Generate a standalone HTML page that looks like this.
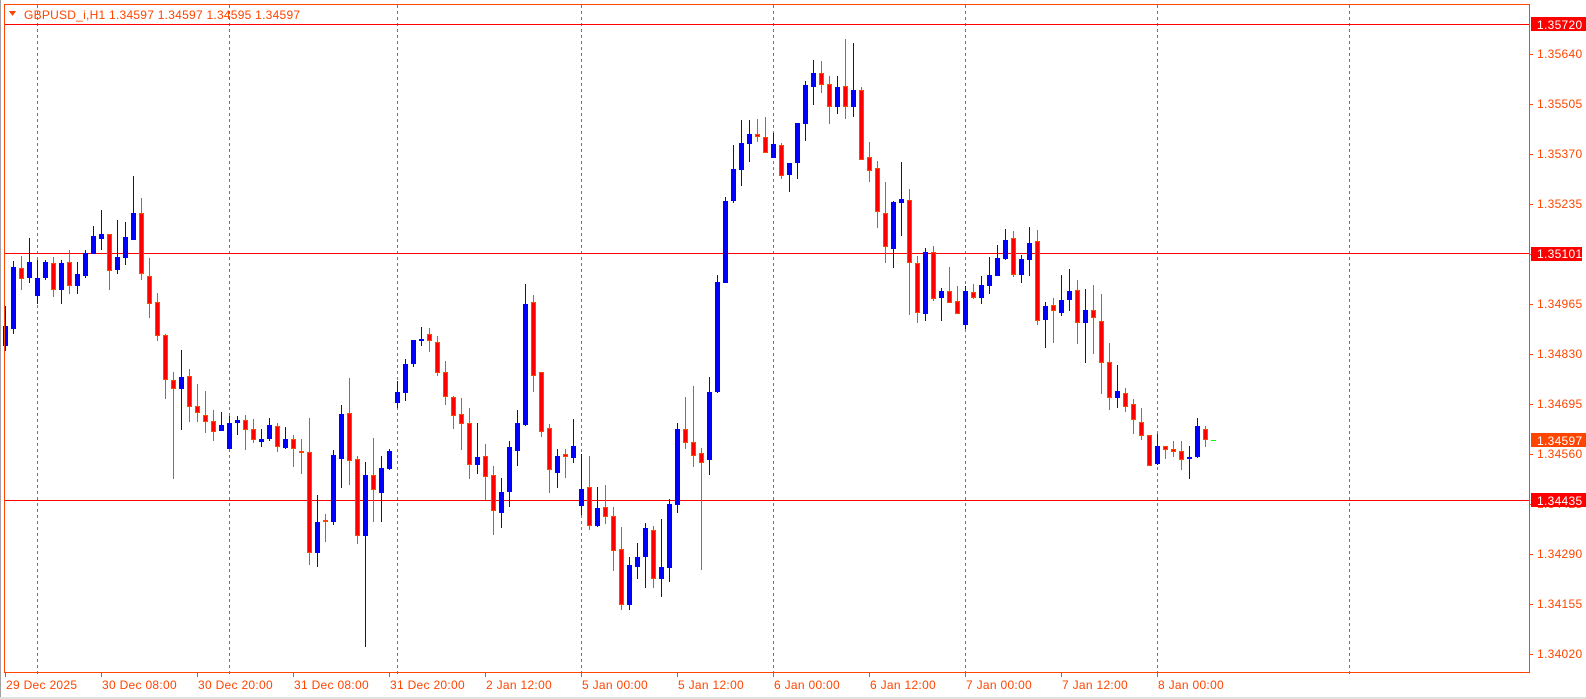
<!DOCTYPE html>
<html><head><meta charset="utf-8">
<style>
html,body{margin:0;padding:0;background:#fff;width:1586px;height:699px;overflow:hidden}
svg{display:block}
text{font-family:"Liberation Sans",sans-serif;font-size:12px;letter-spacing:0.3px}
</style></head><body>
<svg id="s" width="1586" height="699" xmlns="http://www.w3.org/2000/svg" shape-rendering="crispEdges">
<rect x="0" y="0" width="1586" height="699" fill="#fff"/>
<rect x="0" y="0" width="1" height="699" fill="#a0a0a0"/>
<rect x="0" y="697" width="1586" height="2" fill="#e0e0e0"/>
<g id="grid"></g>
<rect x="4" y="24" width="1526" height="1" fill="#ff0000"/>
<rect x="4" y="253" width="1526" height="1" fill="#ff0000"/>
<rect x="4" y="500" width="1526" height="1" fill="#ff0000"/>
<g id="c"></g>
<rect x="1211" y="440" width="5" height="1" fill="#00ff00"/>
<rect x="4.5" y="4.5" width="1525" height="668" fill="none" stroke="#ff4500" stroke-width="1"/>
<g id="ax"></g>
<polygon points="9,11 16,11 12.5,16" fill="#ff4500"/>
<text x="24" y="19" fill="#ff4500" style="letter-spacing:0.25px">GBPUSD_i,H1  1.34597 1.34597 1.34595 1.34597</text>
<g fill="#ff4500">
<text x="6" y="689">29 Dec 2025</text>
<text x="102" y="689">30 Dec 08:00</text>
<text x="198" y="689">30 Dec 20:00</text>
<text x="294" y="689">31 Dec 08:00</text>
<text x="390" y="689">31 Dec 20:00</text>
<text x="486" y="689">2 Jan 12:00</text>
<text x="582" y="689">5 Jan 00:00</text>
<text x="678" y="689">5 Jan 12:00</text>
<text x="774" y="689">6 Jan 00:00</text>
<text x="870" y="689">6 Jan 12:00</text>
<text x="966" y="689">7 Jan 00:00</text>
<text x="1062" y="689">7 Jan 12:00</text>
<text x="1158" y="689">8 Jan 00:00</text>
</g>
<g fill="#ff4500">
<text x="1537" y="58">1.35640</text>
<text x="1537" y="108">1.35505</text>
<text x="1537" y="158">1.35370</text>
<text x="1537" y="208">1.35235</text>
<text x="1537" y="308">1.34965</text>
<text x="1537" y="358">1.34830</text>
<text x="1537" y="408">1.34695</text>
<text x="1537" y="458">1.34560</text>
<text x="1537" y="508">1.34425</text>
<text x="1537" y="558">1.34290</text>
<text x="1537" y="608">1.34155</text>
<text x="1537" y="658">1.34020</text>
</g>
<rect x="1531" y="17" width="55" height="14" fill="#ff0000"/>
<text x="1537" y="29" fill="#fff">1.35720</text>
<rect x="1531" y="247" width="51" height="14" fill="#ff0000"/>
<text x="1537" y="258" fill="#fff">1.35101</text>
<rect x="1531" y="433" width="55" height="14" fill="#ff4500"/>
<text x="1537" y="445" fill="#fff">1.34597</text>
<rect x="1531" y="493" width="55" height="14" fill="#ff0000"/>
<text x="1537" y="505" fill="#fff">1.34435</text>
</svg>
<script>
var NS="http://www.w3.org/2000/svg";
function R(g,x,y,w,h,f){var r=document.createElementNS(NS,"rect");r.setAttribute("x",x);r.setAttribute("y",y);r.setAttribute("width",w);r.setAttribute("height",h);r.setAttribute("fill",f);g.appendChild(r);}
var grid=document.getElementById("grid");
[37,229,397,581,773,965,1157,1349].forEach(function(x){for(var y=5;y<673;y+=6)R(grid,x,y,1,3,"#ff4500");});
var ax=document.getElementById("ax");
[53.6,103.6,153.6,203.7,253.7,303.7,353.7,403.7,453.7,503.7,553.7,603.7,653.7].forEach(function(y){R(ax,1530,Math.round(y),3,1,"#ff4500");});
for(var i=0;i<13;i++)R(ax,5+96*i,673,1,4,"#ff4500");
var d=[
[306,351,326,346,1],[261,334,267,329,1],[256,290,268,279,0],[238,283,262,278,1],[260,304,278,296,1],
[260,280,262,278,1],[257,297,263,290,0],[260,304,263,290,1],[250,294,262,286,0],[262,294,274,286,1],
[250,278,253,276,1],[226,254,236,254,1],[210,250,234,239,1],[234,290,234,271,0],[220,274,257,270,1],
[222,265,237,258,1],[176,240,213,240,1],[198,280,213,274,0],[258,318,276,304,0],[293,341,302,336,0],
[334,399,335,380,0],[372,479,380,389,0],[350,430,377,389,1],[369,422,376,407,0],[384,422,406,413,0],
[391,433,415,422,0],[410,441,421,432,0],[412,431,425,431,1],[416,449,423,449,1],[416,435,420,423,1],
[415,450,420,430,0],[419,443,429,440,0],[429,447,439,442,1],[418,441,425,439,1],[423,452,426,447,0],
[427,449,439,448,1],[435,467,439,449,0],[439,474,451,453,0],[418,565,452,553,0],[495,567,522,553,1],
[514,542,520,522,0],[450,525,455,522,1],[405,488,414,459,1],[378,485,413,461,0],[456,544,459,536,0],
[462,647,475,536,1],[438,522,475,490,0],[456,522,468,493,1],[449,470,451,469,1],[381,408,392,403,1],
[359,401,364,393,1],[340,367,340,364,1],[327,346,339,341,1],[328,352,334,341,0],[336,376,342,373,0],
[361,405,372,397,0],[396,429,397,416,0],[398,450,414,424,0],[408,479,423,465,0],[423,474,457,465,1],
[444,500,456,477,0],[466,535,475,511,0],[478,528,492,513,1],[441,507,447,492,1],[410,466,423,451,1],
[284,426,304,425,1],[295,392,302,376,0],[372,437,372,432,0],[424,493,428,470,0],[449,488,456,473,1],
[449,478,454,457,0],[419,463,446,458,1],[454,515,489,506,1],[456,530,487,526,0],[487,527,508,526,1],
[485,524,507,517,0],[507,571,516,551,0],[527,610,549,605,0],[557,610,565,605,1],[543,579,557,567,1],
[523,588,528,557,1],[526,588,530,579,0],[519,597,567,579,1],[499,582,504,568,1],[423,513,429,505,1],
[397,449,429,443,0],[386,467,442,456,0],[448,570,453,463,0],[377,475,392,460,1],[275,393,282,392,1],
[197,283,201,283,1],[145,203,169,201,1],[120,186,143,170,1],[120,162,134,144,1],[119,142,134,137,0],
[117,153,137,153,0],[133,158,144,158,1],[143,179,145,176,0],[163,192,163,175,1],[123,179,123,163,1],
[81,141,85,124,1],[60,105,73,87,1],[61,93,73,85,0],[76,124,84,107,0],[76,114,87,107,1],
[39,119,86,107,0],[43,117,90,107,1],[87,160,90,160,0],[142,182,157,171,0],[161,228,168,212,0],
[182,263,213,247,0],[201,268,202,249,1],[162,236,199,203,1],[189,315,200,263,0],[256,323,263,313,0],
[248,321,252,314,1],[246,301,252,299,0],[288,321,291,298,1],[267,303,291,303,0],[286,314,301,314,0],
[286,329,291,325,1],[284,299,292,298,0],[276,304,285,298,1],[257,294,275,286,1],[245,276,258,276,1],
[229,260,240,259,1],[231,277,238,275,0],[255,283,259,275,1],[227,276,243,260,1],[230,325,241,321,0],
[302,348,306,320,1],[298,343,305,311,0],[275,316,300,313,1],[269,311,291,300,1],[280,344,290,323,0],
[289,363,310,323,1],[285,354,310,318,0],[294,394,321,363,0],[343,410,362,398,0],[365,408,391,398,1],
[388,412,393,407,0],[399,434,404,420,0],[408,440,422,436,0],[435,466,435,466,0],[434,465,446,464,1],
[446,459,446,450,0],[441,457,449,452,0],[441,470,451,460,0],[446,479,457,459,1],[418,458,426,457,1],
[426,447,429,440,0]
];
var g=document.getElementById("c");
d.forEach(function(c,i){
 var x=5+8*i, bull=c[4];
 var wc=bull?"#0000ff":"#ff4500";
 R(g,x,c[0],1,c[1]-c[0],wc);
 var h=Math.max(1,c[3]-c[2]);
 if(bull){R(g,x-2,c[2],5,h,"#0000ff");}
 else{R(g,x-2,c[2],5,h,"#ff4500");if(h>2)R(g,x-1,c[2]+1,3,h-2,"#ff0000");}
});
</script>
</body></html>
